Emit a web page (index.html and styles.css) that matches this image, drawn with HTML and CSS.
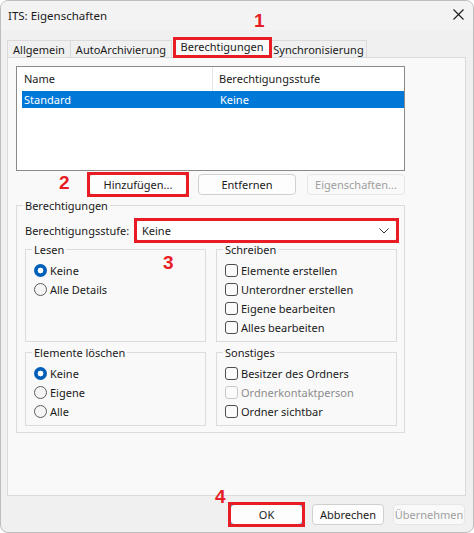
FILE: index.html
```html
<!DOCTYPE html>
<html lang="de">
<head>
<meta charset="utf-8">
<title>ITS: Eigenschaften</title>
<link rel="stylesheet" href="styles.css">
</head>
<body>
<div class="window">
  <div class="titlebar">
    <span class="title">ITS: Eigenschaften</span>
    <span class="close"><svg width="11" height="11" viewBox="0 0 11 11"><path d="M0.5 0.5 L10.5 10.5 M10.5 0.5 L0.5 10.5" stroke="#1b1b1b" stroke-width="1.1" fill="none"/></svg></span>
  </div>
  <div class="tabs">
    <div class="tab tab-allg">Allgemein</div>
    <div class="tab tab-auto">AutoArchivierung</div>
    <div class="tab tab-active mark-tab">Berechtigungen</div>
    <div class="tab tab-sync">Synchronisierung</div>
  </div>
  <div class="panel">
    <div class="list">
      <div class="list-head">
        <div class="col1">Name</div>
        <div class="col2">Berechtigungsstufe</div>
      </div>
      <div class="list-row">
        <div class="col1">Standard</div>
        <div class="col2">Keine</div>
      </div>
    </div>
    <div class="btnrow">
      <div class="btn mark">Hinzufügen...</div>
      <div class="btn">Entfernen</div>
      <div class="btn disabled">Eigenschaften...</div>
    </div>
    <fieldset class="group outer">
      <legend>Berechtigungen</legend>
      <div class="levelrow">
        <span class="levellabel">Berechtigungsstufe:</span>
        <div class="combo mark">
          <span>Keine</span>
          <svg width="10" height="6" viewBox="0 0 10 6"><path d="M0.5 0.5 L5 5 L9.5 0.5" stroke="#333" stroke-width="1" fill="none"/></svg>
        </div>
      </div>
      <div class="grid">
        <fieldset class="group sub">
          <legend>Lesen</legend>
          <div class="item"><span class="radio checked"></span>Keine</div>
          <div class="item"><span class="radio"></span>Alle Details</div>
        </fieldset>
        <fieldset class="group sub">
          <legend>Schreiben</legend>
          <div class="item"><span class="check"></span>Elemente erstellen</div>
          <div class="item"><span class="check"></span>Unterordner erstellen</div>
          <div class="item"><span class="check"></span>Eigene bearbeiten</div>
          <div class="item"><span class="check"></span>Alles bearbeiten</div>
        </fieldset>
        <fieldset class="group sub">
          <legend>Elemente löschen</legend>
          <div class="item"><span class="radio checked"></span>Keine</div>
          <div class="item"><span class="radio"></span>Eigene</div>
          <div class="item"><span class="radio"></span>Alle</div>
        </fieldset>
        <fieldset class="group sub">
          <legend>Sonstiges</legend>
          <div class="item"><span class="check"></span>Besitzer des Ordners</div>
          <div class="item item-disabled"><span class="check"></span>Ordnerkontaktperson</div>
          <div class="item"><span class="check"></span>Ordner sichtbar</div>
        </fieldset>
      </div>
    </fieldset>
  </div>
  <div class="footer">
    <div class="btn fbtn default mark">OK</div>
    <div class="btn fbtn">Abbrechen</div>
    <div class="btn fbtn disabled">Übernehmen</div>
  </div>
  <span class="anno anno1">1</span>
  <span class="anno anno2">2</span>
  <span class="anno anno3">3</span>
  <span class="anno anno4">4</span>
</div>
</body>
</html>
```
FILE: styles.css
```css
* { box-sizing: border-box; }
html, body { margin: 0; padding: 0; background: #ffffff; }
body {
  font-family: "Noto Sans", "Open Sans", "DejaVu Sans", sans-serif;
  font-size: 11px;
  color: #1a1a1a;
}
.window {
  position: relative;
  width: 474px;
  height: 533px;
  border: 1px solid #bdbdbd;
  border-radius: 8px;
  background: #f0f0f0;
  overflow: hidden;
}
.titlebar {
  height: 29px;
  display: flex;
  align-items: center;
  justify-content: space-between;
  padding-left: 7px;
  padding-right: 9px;
  background: #f3f3f3;
}
.title { font-size: 11.5px; color: #1a1a1a; }
.close { display: flex; width: 11px; height: 11px; margin-top: -2px; }

.tabs {
  position: relative;
  z-index: 1;
  display: flex;
  align-items: flex-start;
  height: 21px;
  margin-top: 7px;
  margin-bottom: -1px;
  padding-left: 6px;
}
.tab {
  height: 17px;
  margin-top: 3px;
  border: 1px solid #dadada;
  border-bottom: none;
  background: #f0f0f0;
  display: flex;
  align-items: center;
  justify-content: center;
  line-height: 15px;
  white-space: nowrap;
}
.tab-allg { width: 64px; }
.tab-auto { width: 102px; margin-left: -1px; }
.tab-active {
  width: 98px;
  height: 21px;
  margin-top: 0;
  margin-left: 1px;
  background: #f9f9f9;
  padding-bottom: 3px;
}
.tab-sync { width: 97px; margin-left: -1px; }
.mark-tab { position: relative; }
.mark-tab::after {
  content: "";
  position: absolute;
  top: -1px;
  left: -1px;
  right: -2px;
  bottom: 0;
  border: 3px solid #e81c24;
}

.panel {
  margin-left: 6px;
  width: 459px;
  height: 439px;
  border: 1px solid #dadada;
  background: #f9f9f9;
  padding: 8px 0 0 8px;
}
.list {
  width: 389px;
  height: 105px;
  border: 1px solid #8a8a8a;
  background: #ffffff;
}
.list-head {
  display: flex;
  height: 24px;
  line-height: 24px;
}
.list-head .col1 {
  width: 196px;
  padding-left: 7px;
  border-right: 1px solid #e5e5e5;
}
.list-head .col2 { padding-left: 6px; }
.list-row {
  display: flex;
  height: 17px;
  line-height: 17px;
  margin-left: 5px;
  background: #0078d7;
  color: #ffffff;
}
.list-row .col1 { width: 192px; padding-left: 2px; }
.list-row .col2 { padding-left: 6px; }

.btnrow {
  width: 389px;
  margin-top: 3px;
  display: flex;
  justify-content: flex-end;
  gap: 11px;
}
.btn {
  width: 98px;
  height: 21px;
  border: 1px solid #d0d0d0;
  border-radius: 4px;
  background: #fdfdfd;
  display: flex;
  align-items: center;
  justify-content: center;
  white-space: nowrap;
  color: #1a1a1a;
}
.btn.disabled {
  color: #a0a0a0;
  border-color: #e6e6e6;
  background: #f9f9f9;
}
.mark { position: relative; }
.mark::after {
  content: "";
  position: absolute;
  top: -3px;
  left: -3px;
  right: -3px;
  bottom: -3px;
  border: 3px solid #e81c24;
}

.group {
  margin: 0;
  border: 1px solid #dcdcdc;
  min-width: 0;
}
.group legend {
  padding: 0 2px;
  line-height: 15px;
  color: #1a1a1a;
}
.outer {
  width: 389px;
  height: 235px;
  margin-top: 3px;
  padding: 7px 0 6px 6px;
}
.levelrow {
  display: flex;
  align-items: center;
  margin-left: 2px;
  height: 21px;
}
.levellabel { width: 111px; }
.combo {
  width: 261px;
  height: 21px;
  background: #ffffff;
  border: 1px solid #d6d6d6;
  border-radius: 3px;
  display: flex;
  align-items: center;
  justify-content: space-between;
  padding: 0 7px 0 5px;
}
.grid {
  margin-top: 1px;
  margin-left: 2px;
  display: grid;
  grid-template-columns: 181px 181px;
  column-gap: 10px;
  row-gap: 3px;
  width: 372px;
}
.sub {
  padding: 4px 0 4px 6px;
}
.item {
  display: flex;
  align-items: center;
  height: 19px;
  margin-left: 2px;
  white-space: nowrap;
}
.radio {
  width: 13px;
  height: 13px;
  border-radius: 50%;
  border: 1px solid #5c5c5c;
  background: #f5f5f5;
  margin-right: 3px;
  flex: none;
}
.radio.checked {
  border: none;
  background: radial-gradient(circle, #ffffff 0 2.6px, #005fb8 3.2px);
}
.check {
  width: 13px;
  height: 13px;
  border-radius: 3px;
  border: 1px solid #4d4d4d;
  background: #fbfbfb;
  margin-right: 3px;
  flex: none;
}
.item-disabled { color: #8d8d8d; }
.item-disabled .check { border-color: #c9c9c9; }

.footer {
  display: flex;
  justify-content: flex-end;
  margin-top: 8px;
  padding-right: 8px;
}
.fbtn { width: 72px; margin-left: 9px; }
.fbtn.default { width: 73px; border-color: #4a86c7; }

.anno {
  position: absolute;
  font-family: "Liberation Sans", Arial, sans-serif;
  font-weight: bold;
  font-size: 19px;
  line-height: 19px;
  color: #e81c24;
}
.anno1 { left: 253px; top: 10px; }
.anno2 { left: 58px; top: 172px; }
.anno3 { left: 162px; top: 252px; }
.anno4 { left: 214px; top: 486px; }
```
